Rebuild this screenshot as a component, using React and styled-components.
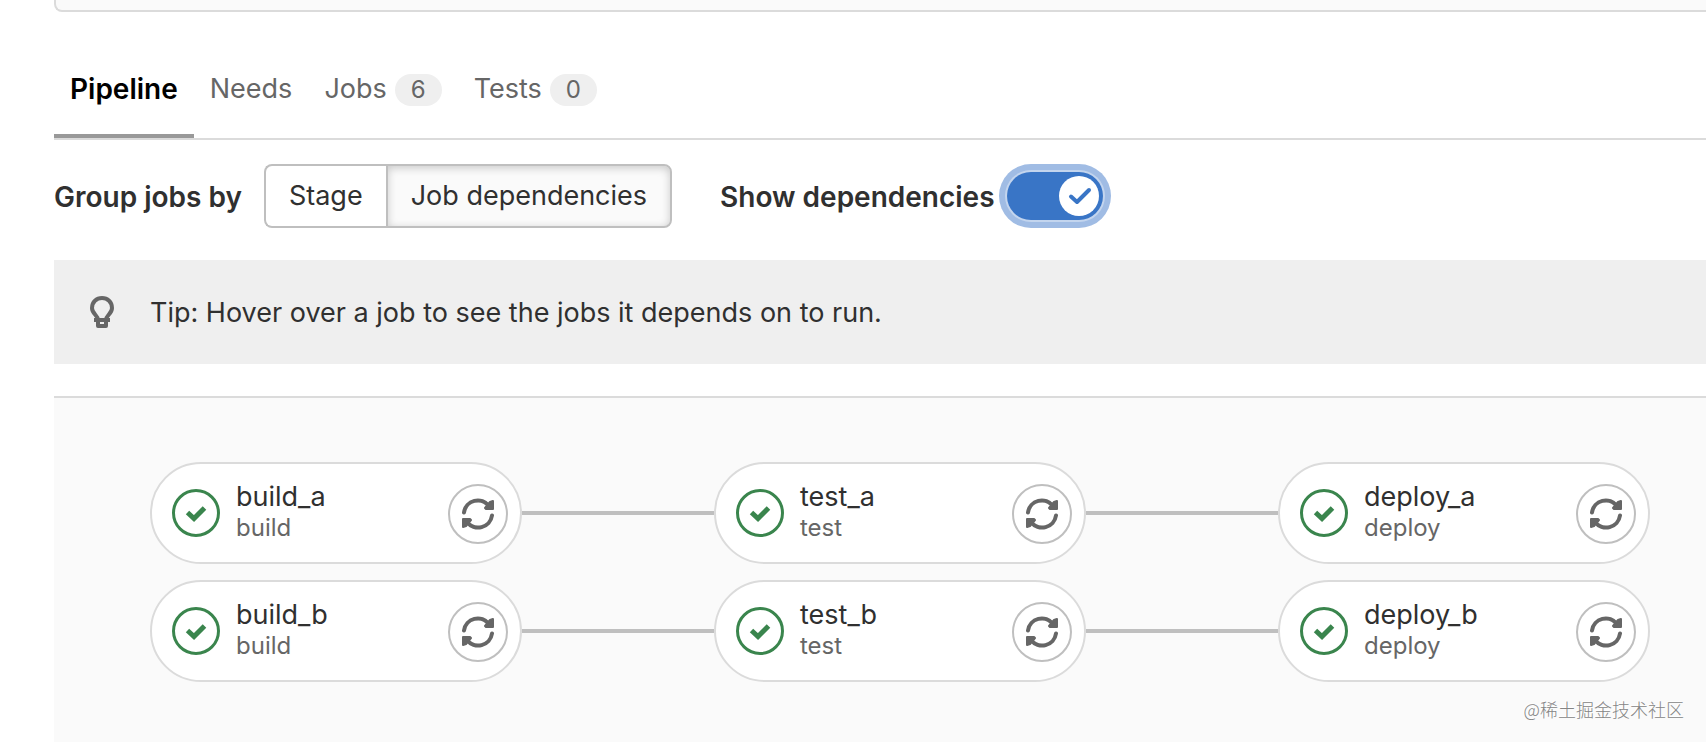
import React from 'react';
import styled, { createGlobalStyle } from 'styled-components';

const GlobalStyle = createGlobalStyle`
  * {
    box-sizing: border-box;
  }

  body {
    margin: 0;
    background: #fff;
    color: #303030;
    font-family: Inter, "Noto Sans CJK SC", sans-serif;
    font-size: 27px;
    line-height: 32px;
    overflow: hidden;
  }
`;

const tabs = [
  { name: 'Pipeline', active: true },
  { name: 'Needs' },
  { name: 'Jobs', count: 6 },
  { name: 'Tests', count: 0 },
];

const chains = [
  [
    { name: 'build_a', stage: 'build' },
    { name: 'test_a', stage: 'test' },
    { name: 'deploy_a', stage: 'deploy' },
  ],
  [
    { name: 'build_b', stage: 'build' },
    { name: 'test_b', stage: 'test' },
    { name: 'deploy_b', stage: 'deploy' },
  ],
];

const Page = styled.main`
  display: flex;
  flex-direction: column;
  min-height: 100vh;
  padding-left: 54px;
`;

const InfoWell = styled.div`
  height: 12px;
  border: solid #dbdbdb;
  border-width: 0 0 2px 2px;
  border-bottom-left-radius: 8px;
  background: #fafafa;
`;

const TabBar = styled.nav`
  display: flex;
  margin-top: 44px;
  border-bottom: 2px solid #dbdbdb;
`;

const Tab = styled.a`
  display: flex;
  gap: 8px;
  height: 82px;
  padding: 16px 16px 0;
  border-bottom: 4px solid ${(props) => (props.$active ? '#999' : 'transparent')};
  color: ${(props) => (props.$active ? '#000' : '#666')};
  font-size: ${(props) => (props.$active ? 28 : 27)}px;
  font-weight: ${(props) => (props.$active ? 600 : 400)};
  line-height: 34px;
  text-decoration: none;
`;

const Badge = styled.span`
  height: 32px;
  margin-top: 2px;
  padding: 0 16px;
  border-radius: 16px;
  background: #efefef;
  font-size: 24px;
  line-height: 32px;
`;

const Toolbar = styled.div`
  display: flex;
  align-items: center;
  margin-top: 24px;
`;

const ToolbarLabel = styled.label`
  padding-top: 2px;
  font-size: 28px;
  font-weight: 600;
`;

const ButtonGroup = styled.div`
  display: flex;
  margin: 0 48px 0 22px;
`;

const GroupButton = styled.button`
  height: 64px;
  padding: 0 23px;
  border: 2px solid #bfbfbf;
  background: ${(props) => (props.$selected ? '#fafafa' : '#fff')};
  box-shadow: ${(props) => (props.$selected ? 'inset 0 2px 8px rgba(0, 0, 0, 0.2)' : 'none')};
  color: inherit;
  font: inherit;

  &:first-child {
    border-right: 0;
    border-radius: 8px 0 0 8px;
  }

  &:last-child {
    border-radius: 0 8px 8px 0;
  }
`;

const Switch = styled.span`
  display: grid;
  width: 96px;
  height: 48px;
  margin-left: 12px;
  border-radius: 24px;
  background: #3975c6;
  box-shadow: 0 0 0 2px #c3d5ee, 0 0 0 8px #a0bce4;

  > * {
    grid-area: 1 / 1;
  }
`;

const SwitchInput = styled.input`
  width: 100%;
  height: 100%;
  margin: 0;
  appearance: none;
  outline: none;
`;

const SwitchKnob = styled.svg`
  justify-self: end;
  width: 40px;
  height: 40px;
  margin: 4px;
  pointer-events: none;
`;

const Tip = styled.div`
  display: flex;
  align-items: center;
  gap: 32px;
  height: 104px;
  margin-top: 32px;
  padding: 0 32px;
  background: #efefef;
`;

const TipText = styled.span`
  padding-top: 2px;
`;

const Graph = styled.section`
  display: flex;
  flex: 1;
  flex-direction: column;
  gap: 16px;
  margin-top: 32px;
  padding: 64px 96px 60px;
  border-top: 2px solid #dbdbdb;
  background: #fafafa;
`;

const Chain = styled.div`
  display: flex;
  align-items: center;
`;

const Link = styled.div`
  flex: none;
  width: 192px;
  height: 4px;
  background: #bfbfbf;
`;

const JobPill = styled.div`
  display: flex;
  flex: none;
  align-items: center;
  width: 372px;
  height: 102px;
  padding: 0 12px 0 20px;
  border: 2px solid #dbdbdb;
  border-radius: 51px;
  background: #fff;
`;

const JobText = styled.div`
  flex: 1;
  margin-left: 16px;
  padding-bottom: 2px;
`;

const StageName = styled.div`
  color: #666;
  font-size: 24px;
  line-height: 30px;
`;

const RetryButton = styled.button`
  display: grid;
  place-items: center;
  width: 60px;
  height: 60px;
  margin-top: 2px;
  padding: 0;
  border: 2px solid #bfbfbf;
  border-radius: 50%;
  background: #fff;
`;

const Watermark = styled.div`
  position: absolute;
  right: 22px;
  bottom: 17px;
  color: #858585;
  font-family: "Noto Sans CJK SC", sans-serif;
  font-size: 18px;
  font-weight: 300;
  line-height: 32px;
  text-shadow: -1px -1px 0 #fff;
`;

const BulbIcon = () => (
  <svg width="32" height="32" viewBox="0 0 32 32" fill="none" aria-hidden="true">
    <path
      d="M12 24c0-5-6-6-6-12C6 6 10.500 2 16 2s10 4 10 10C26 18 20 19 20 24"
      stroke="#666"
      strokeWidth="4"
    />
    <path
      d="M8 22h16v4h-2v4a2 2 0 0 1-2 2h-8a2 2 0 0 1-2-2v-4H8zM14 26v2h4v-2z"
      fill="#666"
      fillRule="evenodd"
    />
  </svg>
);

const SuccessIcon = () => (
  <svg width="48" height="48" viewBox="0 0 48 48" fill="none" stroke="#3a854d" aria-hidden="true">
    <circle cx="24" cy="24" r="22.500" strokeWidth="3" />
    <path d="M15.500 23.500l6.500 6 10.500-10.500" strokeWidth="5" strokeLinejoin="miter" />
  </svg>
);

const RetryIcon = () => (
  <svg width="32" height="32" viewBox="0 0 32 32" aria-hidden="true">
    <g fill="none" stroke="#666" strokeWidth="4" strokeLinecap="round">
      <path d="M2 14.500A14 14 0 0 1 27 8" />
      <path d="M30 17.500A14 14 0 0 1 5 24" />
    </g>
    <g fill="#666" stroke="#666" strokeWidth="2" strokeLinejoin="round">
      <path d="M31 3v8h-7l-1-1 5-6z" />
      <path d="M1 29v-8h7l1 1-5 6z" />
    </g>
  </svg>
);

const Job = ({ job }) => (
  <JobPill>
    <SuccessIcon />
    <JobText>
      <div>{job.name}</div>
      <StageName>{job.stage}</StageName>
    </JobText>
    <RetryButton type="button" aria-label={`Retry ${job.name}`}>
      <RetryIcon />
    </RetryButton>
  </JobPill>
);

export default function App() {
  const [groupBy, setGroupBy] = React.useState('needs');
  const [showLinks, setShowLinks] = React.useState(true);

  return (
    <Page>
      <GlobalStyle />
      <InfoWell />
      <TabBar>
        {tabs.map((tab) => (
          <Tab key={tab.name} href="#" $active={tab.active}>
            {tab.name}
            {tab.count !== undefined && <Badge>{tab.count}</Badge>}
          </Tab>
        ))}
      </TabBar>
      <Toolbar>
        <ToolbarLabel as="span" id="group-by">Group jobs by</ToolbarLabel>
        <ButtonGroup role="group" aria-labelledby="group-by">
          <GroupButton type="button" $selected={groupBy === 'stage'} onClick={() => setGroupBy('stage')}>
            Stage
          </GroupButton>
          <GroupButton type="button" $selected={groupBy === 'needs'} onClick={() => setGroupBy('needs')}>
            Job dependencies
          </GroupButton>
        </ButtonGroup>
        <ToolbarLabel htmlFor="show-links">Show dependencies</ToolbarLabel>
        <Switch>
          <SwitchInput
            id="show-links"
            type="checkbox"
            role="switch"
            checked={showLinks}
            onChange={(e) => setShowLinks(e.target.checked)}
          />
          <SwitchKnob viewBox="0 0 40 40" aria-hidden="true">
            <circle cx="20" cy="20" r="20" fill="#fff" />
            <path
              d="M12 20.500l6 5.500L30 14"
              fill="none"
              stroke="#3975c6"
              strokeWidth="4"
              strokeLinecap="round"
              strokeLinejoin="round"
            />
          </SwitchKnob>
        </Switch>
      </Toolbar>
      <Tip>
        <BulbIcon />
        <TipText>Tip: Hover over a job to see the jobs it depends on to run.</TipText>
      </Tip>
      <Graph>
        {chains.map((jobs) => (
          <Chain key={jobs[0].name}>
            {jobs.map((job, i) => (
              <React.Fragment key={job.name}>
                {i > 0 && showLinks && <Link />}
                <Job job={job} />
              </React.Fragment>
            ))}
          </Chain>
        ))}
      </Graph>
      <Watermark>@稀土掘金技术社区</Watermark>
    </Page>
  );
}
